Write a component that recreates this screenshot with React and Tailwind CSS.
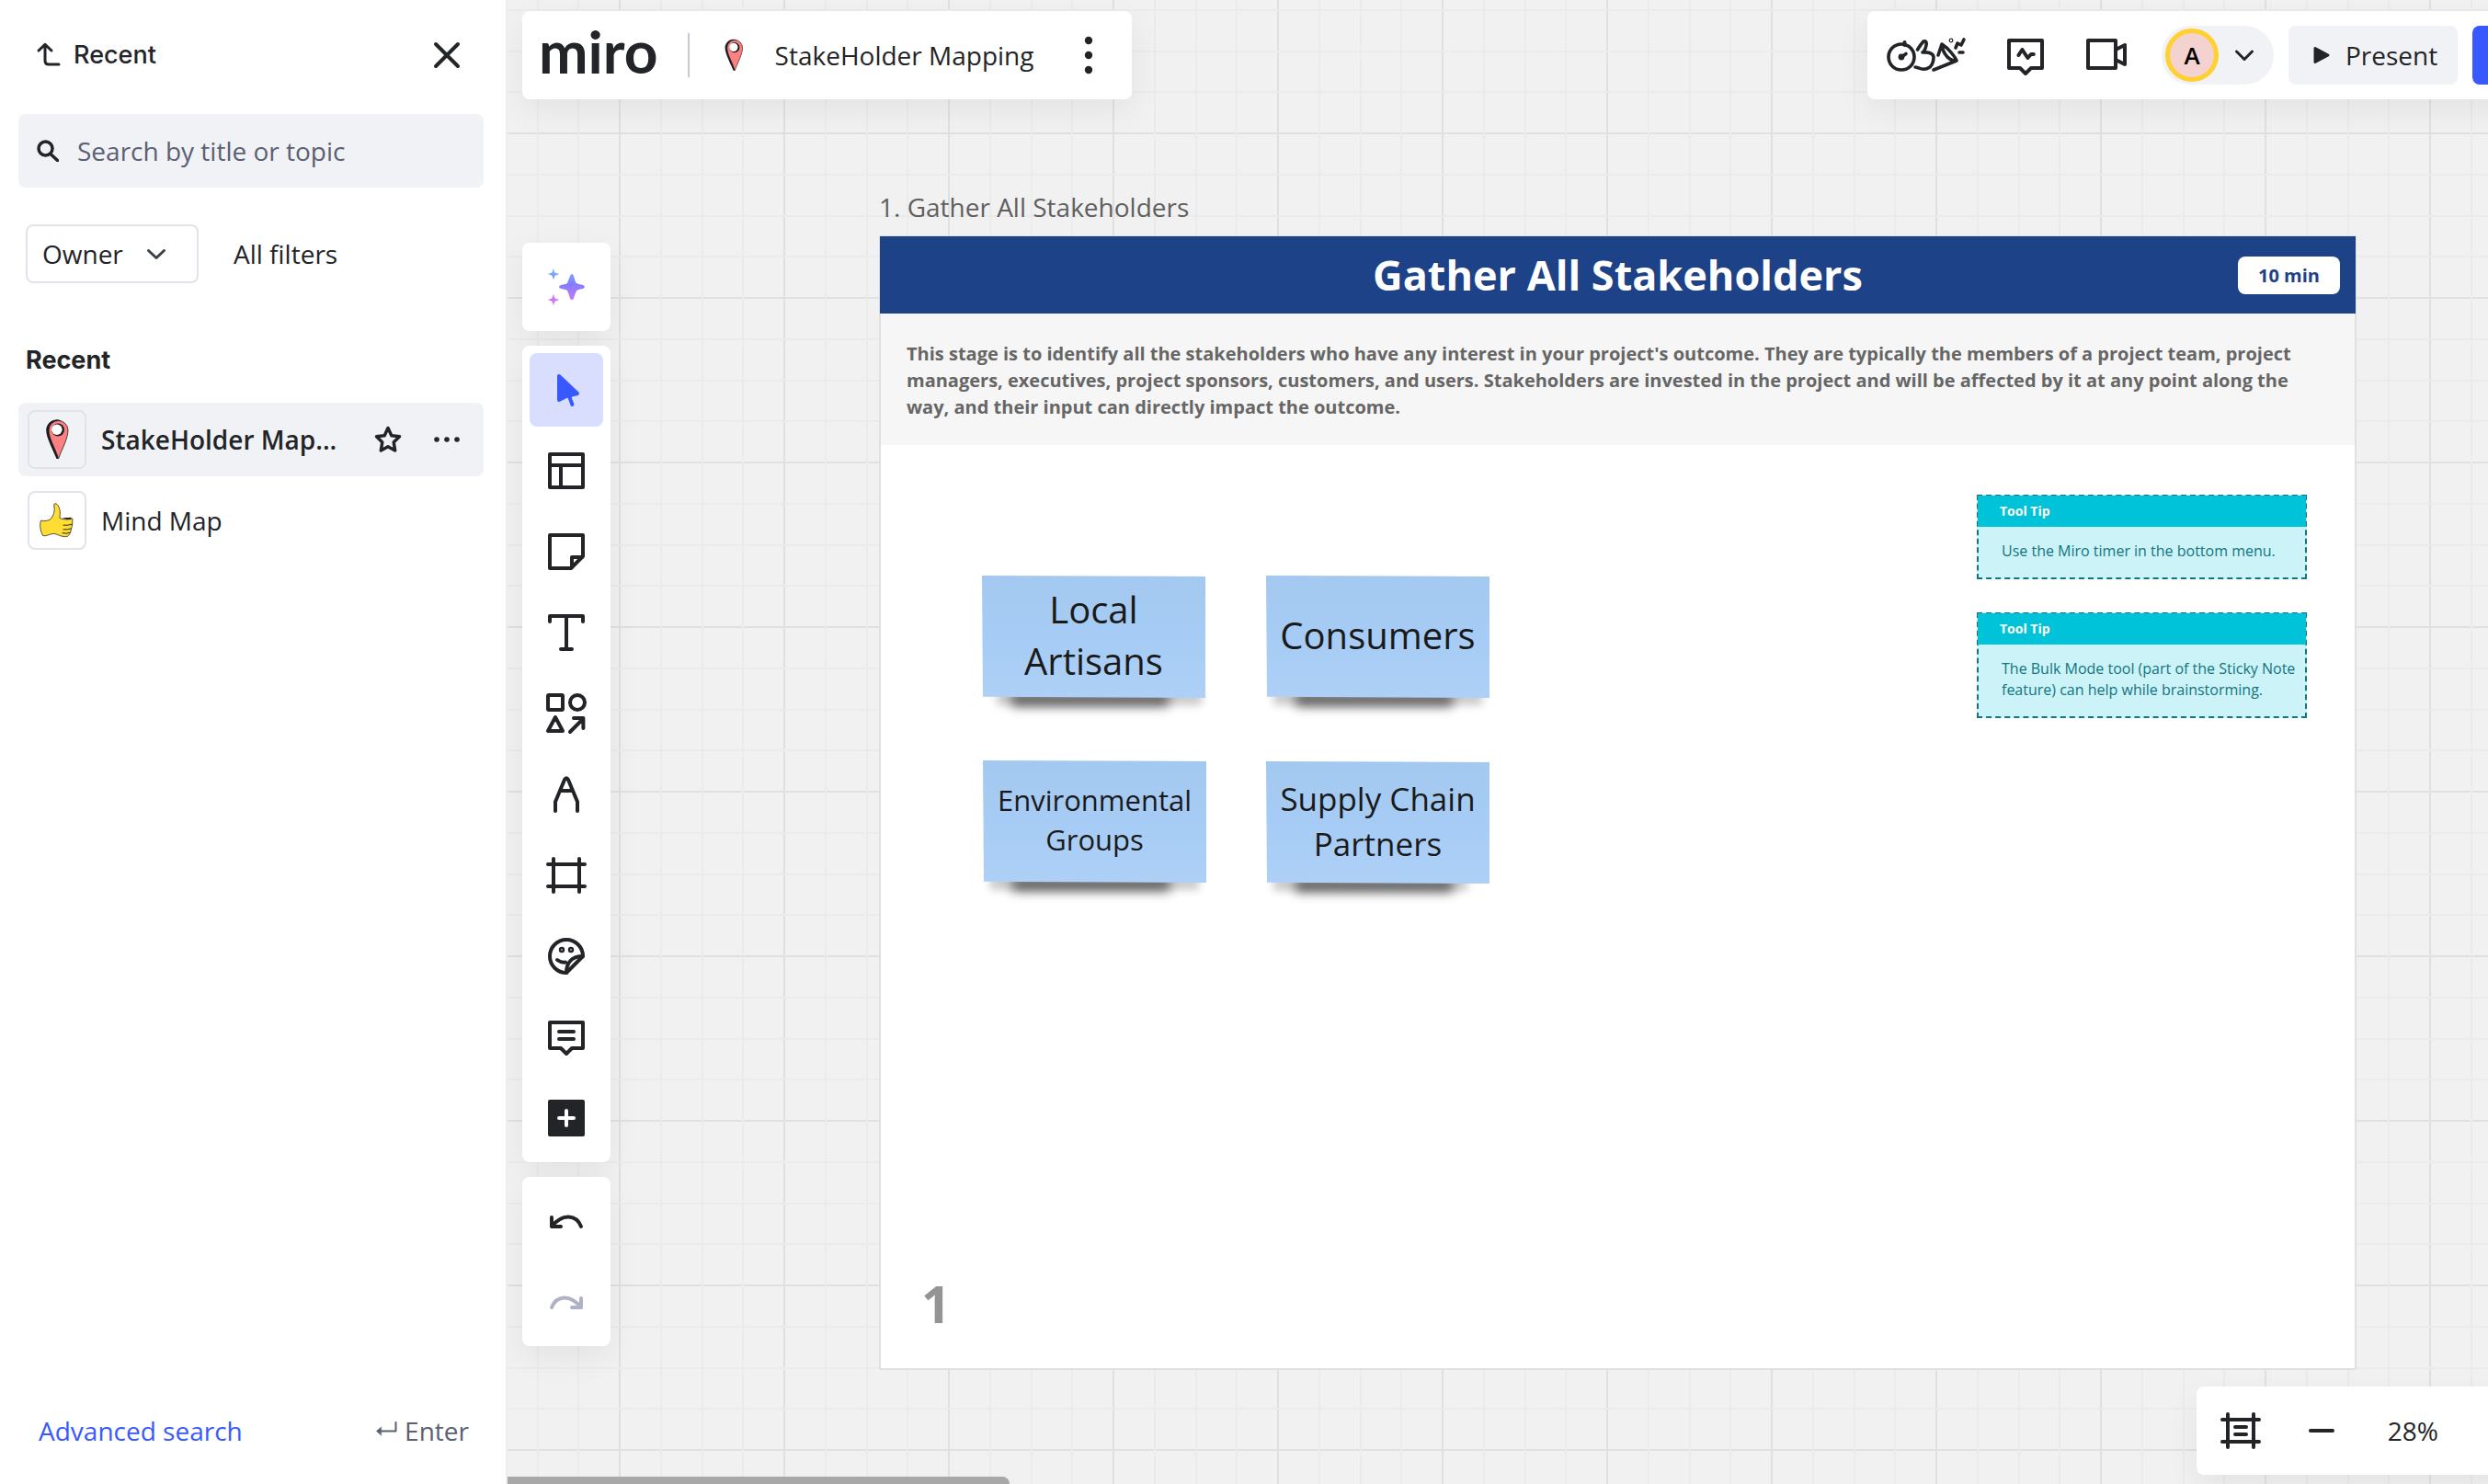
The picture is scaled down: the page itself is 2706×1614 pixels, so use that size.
const INK = "#222428";

function Icon({ children, color = INK, className = "size-12", box = "0 0 24 24", width = 2 }) {
  return (
    <svg viewBox={box} className={className} fill="none" stroke={color} strokeWidth={width} strokeLinecap="round" strokeLinejoin="round" aria-hidden="true">
      {children}
    </svg>
  );
}

function PinDrawing({ className, box = "0 0 64 64" }) {
  return (
    <svg viewBox={box} className={className} aria-hidden="true">
      <path d="M31.5 53C28 44 20 30 20.200 21.500A11.500 11.500 0 0 1 36 11.200L33 53Z" fill="#1b1c20" />
      <path d="M33.500 53C30.500 42 23 31 23 22A10.500 10.500 0 0 1 44 22C44 31 37 43 33.500 53Z" fill="#ff8080" stroke="#1b1c20" strokeWidth="0.800" />
      <circle cx="33" cy="21.500" r="7" fill="#1b1c20" />
      <circle cx="31.800" cy="21.200" r="5.800" fill="#fff" />
    </svg>
  );
}

function ThumbDrawing() {
  return (
    <svg viewBox="0 0 64 64" className="size-16" aria-hidden="true">
      <path d="M38 29L49 28.500L47 32Z" fill="#1b1c20" />
      <path
        d="M13.500 32C17 33.500 22 32 24 31C28 27 30 21 28.500 15C28 12 31 11.500 33 14.500C36 19 36 24 35 29C39 31.500 45 31 50 30C50 34 50 38 48.500 42C48 46 46.500 49 44 50.500C39 52 34 48.500 29 47.500C24 47 20 51 15.500 49.500C12.500 44 11.500 36 13.500 32Z"
        fill="#ffdd33" stroke="#1b1c20" strokeWidth="0.800"
      />
      <path d="M39 37.500Q45 38 49.500 36.500M39 42.500Q44 43 48.500 41.500M38 46.500Q43 48 47 46" fill="none" stroke="#1b1c20" strokeWidth="1" />
    </svg>
  );
}

const toolIcons = [
  ["Templates", <><rect x="3" y="3" width="18" height="18" /><path d="M3 9h18M9 9v12" /></>],
  ["Sticky note", <><path d="M21 3H3v18h11.500L21 14.500z" /><path d="M15 20.500V15h5.500" /></>],
  ["Text", <path d="M3 6V3h18v3M12 3v18M9 21h6" />],
  ["Shapes and lines", <><rect x="2" y="2" width="8" height="8" rx="0.500" /><circle cx="18" cy="6" r="4" /><path d="M6 14l-4 7.500h8zM14 22l7-7M16 14.500h5.200v5.500" /></>],
  ["Pen", <path d="M6 21v-5l5-12q1-1.800 2 0L18 16v5M9 10h6" />],
  ["Frame", <path d="M2 6h20M2 18h20M5 3v18M19 3v18" />],
  ["Stickers", <><path d="M21 12a9 9 0 1 0-9 9z" /><path d="M12 21c0-5.500 3-9 9-9M7 14q2 1.500 4.500 1.300" /><circle cx="9.500" cy="8.500" r="0.600" /><circle cx="14.500" cy="8.500" r="0.600" /></>],
  ["Comment", <path d="M3 4h18v14h-6l-3 3-3-3H3zM8 9h8M8 13h8" />],
  ["More apps", <><rect x="3" y="3" width="18" height="18" fill={INK} /><path d="M8 12h8M12 8v8" stroke="#fff" /></>],
];

const CARD = "pointer-events-auto bg-white rounded-lg shadow-[0_12px_36px_rgba(5,0,56,0.06)]";

function Sidebar() {
  return (
    <aside className="flex w-[552px] shrink-0 flex-col border-r-2 border-[#ecedf2] bg-white pl-5 pr-6">
      <header className="flex h-[120px] items-center pl-4 pr-3">
        <button className="flex items-center gap-3 font-[Inter,sans-serif] text-[27px] font-medium">
          <Icon className="size-8" box="0 0 16 16" width={1.5}><path d="M3 5.500L6.500 2.200L10 5.500M6.500 2.500V11Q6.500 13 8.500 13H14" /></Icon>
          Recent
        </button>
        <button aria-label="Close" className="ml-auto p-3">
          <Icon className="size-8" box="0 0 32 32" width={4}><path d="M4 4l24 24M28 4L4 28" /></Icon>
        </button>
      </header>

      <div className="mt-1 flex h-20 items-center gap-5 rounded-lg bg-[#f1f2f6] px-5">
        <Icon className="size-6 shrink-0" box="0 0 24 24" width={3.5}><circle cx="9.500" cy="9.500" r="7.500" /><path d="M15 15.500l7.500 7" /></Icon>
        <input type="text" aria-label="Search boards" placeholder="Search by title or topic" className="min-w-0 flex-1 bg-transparent outline-none placeholder:text-[#5b6072]" />
      </div>

      <div className="mt-10 flex items-center gap-[38px] px-2">
        <button className="flex h-16 w-[188px] items-center gap-6 rounded-lg border-2 border-[#e2e3ea] px-4">
          Owner
          <Icon className="size-6" color="#3c3f4a" width={3}><path d="M3.500 8.500l8.500 8 8.500-8" /></Icon>
        </button>
        <button>All filters</button>
      </div>

      <h2 className="mt-16 px-2 font-[Inter,sans-serif] text-[27px] font-bold leading-10">Recent</h2>

      <ul className="mt-[26px] flex flex-col gap-2">
        <li className="flex h-20 items-center rounded-lg bg-[#f1f2f6] pl-[10px] pr-6">
          <span className="rounded-lg border-2 border-[#e2e3ea]"><PinDrawing className="size-15" box="2 2 60 60" /></span>
          <a href="#stakeholder" className="ml-4 whitespace-nowrap font-semibold">StakeHolder Map...</a>
          <div className="ml-auto flex items-center gap-8">
            <button aria-label="Add to favourites">
              <Icon className="size-8" box="0 0 32 32" width={3.5}><path d="M16 3.500l3.800 8.200 8.700 1-6.300 6.300 1.500 9-7.700-4.200-7.700 4.200 1.500-9-6.300-6.300 8.700-1z" /></Icon>
            </button>
            <button aria-label="More options">
              <Icon className="size-8" box="0 0 32 32" color="none"><g fill={INK}><circle cx="5" cy="16" r="2.800" /><circle cx="16" cy="16" r="2.800" /><circle cx="27" cy="16" r="2.800" /></g></Icon>
            </button>
          </div>
        </li>
        <li className="flex h-20 items-center pl-[10px]">
          <span className="flex size-16 items-center justify-center rounded-lg border-2 border-[#e2e3ea]"><ThumbDrawing /></span>
          <a href="#mindmap" className="ml-4">Mind Map</a>
        </li>
      </ul>

      <footer className="mt-auto flex h-[116px] items-center justify-between pl-[22px] pr-4">
        <a href="#advanced" className="text-[#3859ff]">Advanced search</a>
        <span className="flex items-center gap-2 text-[#5b6072]">
          <Icon className="size-6" color="#5b6072" width={2}><path d="M22.500 3v9.500H3" /><path d="M6.500 8L1.500 12.500l5 4.500z" fill="#5b6072" strokeWidth="0.500" /></Icon>
          Enter
        </span>
      </footer>
    </aside>
  );
}

function Grid() {
  return (
    <svg className="absolute inset-0 size-full" aria-hidden="true">
      <defs>
        <pattern id="grid" x="121" y="144" width="179" height="179" patternUnits="userSpaceOnUse">
          <g fill="#e0e0e0"><rect width="179" height="2" /><rect width="2" height="179" /></g>
          <g fill="#ebebeb">
            <rect x="45" width="2" height="179" /><rect x="90" width="2" height="179" /><rect x="134" width="2" height="179" />
            <rect y="45" width="179" height="2" /><rect y="90" width="179" height="2" /><rect y="134" width="179" height="2" />
          </g>
        </pattern>
      </defs>
      <rect width="100%" height="100%" fill="url(#grid)" />
    </svg>
  );
}

function Sticky({ className, lift = "left-4 right-1", children }) {
  return (
    <div className={"absolute h-[133px] w-[243px] " + className}>
      <div className={"absolute bottom-0 h-4 bg-black/20 " + lift + " translate-y-2 blur-[4px]"} />
      <div className="absolute bottom-0 left-8 right-10 h-4 translate-y-[10px] bg-black/50 blur-[6px]" />
      <div className="relative flex h-full items-center justify-center bg-linear-to-b from-[#a3c9f0] via-[#a6ccf5] to-[#aed0f6] pb-1 text-center text-[#1a1a1a] [clip-path:polygon(0_0,100%_1px,100%_100%,1px_99%)]">
        <p>{children}</p>
      </div>
    </div>
  );
}

function Tip({ className, children }) {
  return (
    <section className={"absolute w-[359px] border-2 border-dashed border-[#127580] bg-[#ccf3f8] bg-clip-border text-[#127580] " + className}>
      <h3 className="-m-px bg-[#00c2d9] px-6 text-[14px] font-bold leading-[34px] text-white">Tool Tip</h3>
      <p className="px-[25px] pb-[17px] pt-4 text-[16px] leading-[23px] whitespace-nowrap">{children}</p>
    </section>
  );
}

function Board() {
  return (
    <div className="absolute left-[404px] top-[201px] w-[1607px]">
      <p className="leading-12 text-[#5f5f5f]">1. Gather All Stakeholders</p>
      <article className="relative mt-[7px] h-[1234px] border-2 border-[#e0e0e0] bg-white">
        <header className="relative -mx-px -mt-px flex h-[84px] items-center justify-center bg-[#1d4288]">
          <h1 className="text-[45px] font-bold text-white">Gather All Stakeholders</h1>
          <span className="absolute right-[17px] rounded-lg bg-white px-[22px] text-[20px] font-bold leading-[41px] text-[#1d4288]">10 min</span>
        </header>
        <p className="bg-[#f6f6f6] px-7 pb-[27px] pt-[29px] text-[20px] font-bold leading-[29px] text-[#666666]">
          This stage is to identify all the stakeholders who have any interest in your project's outcome. They are typically the members of a project team, project<br />
          managers, executives, project sponsors, customers, and users. Stakeholders are invested in the project and will be affected by it at any point along the<br />
          way, and their input can directly impact the outcome.
        </p>
        <Sticky className="left-[110px] top-[368px] text-[40px] leading-[56px]">Local<br />Artisans</Sticky>
        <Sticky className="left-[419px] top-[368px] text-[40px] leading-[56px]" lift="left-2 right-2">Consumers</Sticky>
        <Sticky className="left-[111px] top-[569px] text-[31px] leading-[43px]" lift="left-2 right-2">Environmental<br />Groups</Sticky>
        <Sticky className="left-[419px] top-[570px] text-[35px] leading-[49px]" lift="left-2 right-6">Supply Chain<br />Partners</Sticky>
        <Tip className="left-[1192px] top-[280px]">Use the Miro timer in the bottom menu.</Tip>
        <Tip className="left-[1192px] top-[408px]">The Bulk Mode tool (part of the Sticky Note<br />feature) can help while brainstorming.</Tip>
        <span className="absolute bottom-[33px] left-[44px] text-[56px] font-bold leading-[76px] text-[#949494]">1</span>
      </article>
    </div>
  );
}

function Toolbar() {
  return (
    <nav className="flex w-24 flex-col gap-4">
      <div className={CARD + " p-2"}>
        <button aria-label="AI assistant" className="flex size-20 items-center justify-center">
          <svg viewBox="0 0 24 24" className="size-12" aria-hidden="true">
            <defs>
              <linearGradient id="spark" gradientUnits="userSpaceOnUse" x1="12" y1="2" x2="12" y2="21">
                <stop offset="0" stopColor="#74bcff" /><stop offset="0.450" stopColor="#827dff" /><stop offset="1" stopColor="#da78f5" />
              </linearGradient>
            </defs>
            <g fill="url(#spark)">
              <path d="M14 6Q15 4 16 6Q17 10 17.500 10Q18.500 10.500 21 11Q23 12 21 13Q18 13.500 17.500 14.200Q17 15 16 18.200Q15 20 14 18.200Q13 15 12.500 14Q12 13.500 9 13Q7 12 9 11Q12 10.500 12.500 10Z" />
              <path d="M5 1.800Q5.500 4.500 6 4.400L8.200 5L6 5.700Q5.500 6 5 8.300Q4.500 6 4 5.700L1.800 5L4 4.400Q4.500 4 5 1.800Z" />
              <path d="M5 15.800Q5.500 18.300 6 18.400L8.200 19L6 19.700Q5.500 20 5 22.300Q4.500 20 4 19.700L1.800 19L4 18.400Q4.500 18 5 15.800Z" />
            </g>
          </svg>
        </button>
      </div>
      <div className={CARD + " flex flex-col gap-2 p-2"}>
        <button aria-label="Select" className="flex size-20 items-center justify-center rounded-lg bg-[#dadefe]">
          <Icon color="#3859ff">
            <path d="M8 4.500v13L12 15.500L18 14z" fill="#3859ff" />
            <path d="M13 14l2.200 6" />
          </Icon>
        </button>
        {toolIcons.map(([name, art]) => (
          <button key={name} aria-label={name} className="flex size-20 items-center justify-center"><Icon>{art}</Icon></button>
        ))}
      </div>
      <div className={CARD + " flex flex-col gap-2 p-2"}>
        <button aria-label="Undo" className="flex size-20 items-center justify-center">
          <Icon><path d="M4 10v5h5M4 15C10 7.500 17.500 8.500 20 15" /></Icon>
        </button>
        <button aria-label="Redo" disabled className="flex size-20 items-center justify-center">
          <Icon color="#afb2c2"><path d="M20 10v5h-5M20 15C14 7.500 6.500 8.500 4 15" /></Icon>
        </button>
      </div>
    </nav>
  );
}

function TopBar() {
  return (
    <header className="flex items-start justify-between">
      <div className={CARD + " flex h-24 items-center px-[18px] pr-[23px]"}>
        <a href="#home" className="mb-2 font-[Lato,sans-serif] text-[64px] font-bold leading-[80px]">miro</a>
        <span className="ml-8 h-12 w-[2px] bg-[#c7cad5]" />
        <PinDrawing className="ml-8 h-9 w-8" box="12 10 40 44" />
        <a href="#board" className="ml-[29px]">StakeHolder Mapping</a>
        <button aria-label="Board menu" className="ml-9">
          <Icon color="none"><g fill={INK}><circle cx="12" cy="4" r="2.100" /><circle cx="12" cy="12" r="2.100" /><circle cx="12" cy="20" r="2.100" /></g></Icon>
        </button>
      </div>
      <div className={CARD + " -mr-[136px] flex h-24 items-center pl-5 pr-4"}>
        <button aria-label="Facilitation tools">
          <Icon className="h-10 w-[90px]" box="-1 -1 90 40" width={3.6}>
            <circle cx="16" cy="21" r="14" /><path d="M19.500 5v3" strokeWidth="4" /><path d="M16 21l5-3.500" /><circle cx="16" cy="21" r="1.600" />
            <path d="M33.500 13q3-5 6.500-9q4-1 3 4q-1 6-4 8q11-1 12 5q0 7-4 11q-6 4-12 1q-3-1-4-1" />
            <path d="M56 19l4-12q6 4 10 9q5 6 6 9l-25 10M60 7q0 7 6 14q6 5 9 4M75 11l2-5 4 2 3-6M79 16h4" />
            <circle cx="70" cy="3" r="0.600" />
          </Icon>
        </button>
        <button aria-label="Activity" className="ml-[38px]">
          <Icon><path d="M3 4h18v15h-6l-3 3-3-3H3zM8.200 12l2-3 3 4.500 1.800-2h1.400" /></Icon>
        </button>
        <button aria-label="Video call" className="ml-10">
          <Icon><path d="M2 4h15v15H2zM17 9l5-2.500v10.500l-5-2.500" /></Icon>
        </button>
        <button aria-label="Account" className="ml-9 flex h-16 w-[122px] items-center gap-4 rounded-full bg-[#f1f2f6] pl-1">
          <span className="flex size-[58px] items-center justify-center rounded-full border-[5px] border-[#ffd02f] bg-[#f4d2cf] text-[26px] font-semibold text-black">A</span>
          <Icon className="size-6" width={3}><path d="M3.500 8l8.500 8.500 8.500-8.500" /></Icon>
        </button>
        <button className="ml-4 flex h-16 w-[184px] items-center gap-4 rounded-lg bg-[#f1f2f6] pl-[26px]">
          <Icon className="h-6 w-5" box="0 0 20 24" width={3}><path d="M3 4.500v15L17 12z" fill={INK} /></Icon>
          Present
        </button>
        <button aria-label="Share" className="ml-4 h-16 w-[121px] rounded-lg bg-[#3859ff]" />
      </div>
    </header>
  );
}

function ZoomBar() {
  return (
    <div className={CARD + " -mr-[72px] flex h-24 items-center self-end pl-6 pr-24"}>
      <button aria-label="Fit to frame"><Icon><path d="M2 6h20M2 18h20M5 3v18M19 3v18M9 10h6M9 14h6" /></Icon></button>
      <button aria-label="Zoom out" className="ml-10"><Icon><path d="M6 12h12" /></Icon></button>
      <button className="ml-12 mr-[14px] font-medium">28%</button>
    </div>
  );
}

export default function App() {
  return (
    <div className="flex h-screen overflow-hidden bg-white font-['Open_Sans',sans-serif] text-[28px] leading-10 text-[#222428]">
      <Sidebar />
      <main className="relative flex-1 overflow-hidden bg-[#f1f1f1]">
        <Grid />
        <Board />
        <div className="pointer-events-none absolute inset-0 flex flex-col px-4 pt-3 pb-[10px]">
          <TopBar />
          <div className="mt-[156px] flex flex-1 flex-col items-start"><Toolbar /></div>
          <ZoomBar />
        </div>
        <div className="absolute bottom-0 left-0 h-2 w-[546px] rounded-tr-lg bg-[#a8a8a8]" />
      </main>
    </div>
  );
}
